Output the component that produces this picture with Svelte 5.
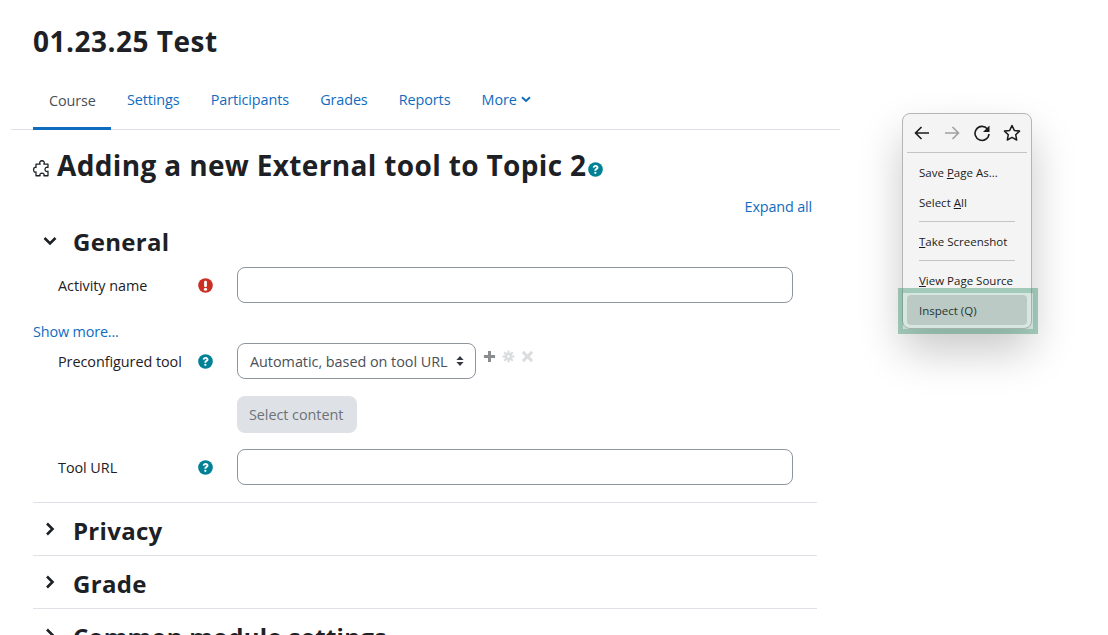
<script lang="ts">
    const tabs = ["Settings", "Participants", "Grades", "Reports"];
    const collapsed = ["Privacy", "Grade", "Common module settings"];
</script>

{#snippet help()}
    <svg class="help" viewBox="0 0 512 512" aria-hidden="true">
        <circle cx="256" cy="256" r="250" fill="#008196" />
        <path d="M160 190c6-56 46-88 100-88 54 0 98 32 98 84 0 40-24 58-50 74-18 11-24 20-24 40h-68c0-40 12-60 42-78 20-12 32-20 32-36 0-16-14-26-32-26-20 0-32 12-36 34z" fill="#fff" />
        <circle cx="250" cy="368" r="38" fill="#fff" />
    </svg>
{/snippet}

{#snippet chevronRight()}
    <svg class="chev" viewBox="0 0 14 14" aria-hidden="true">
        <path d="M4 1.500 9.500 7 4 12.500" fill="none" stroke="#1d2125" stroke-width="2.600" />
    </svg>
{/snippet}

<div class="page">
    <header class="title-row">
        <h1>01.23.25 Test</h1>
    </header>

    <nav class="tabs">
        <span class="tab active">Course</span>
        {#each tabs as tab}
            <span class="tab">{tab}</span>
        {/each}
        <span class="tab">
            More
            <svg class="more-caret" viewBox="0 0 10 7" aria-hidden="true">
                <path d="M1 1.200 5 5l4-3.800" fill="none" stroke="#0f6cbf" stroke-width="1.900" />
            </svg>
        </span>
    </nav>

    <main class="main">
        <div class="page-heading">
            <svg class="puzzle" viewBox="0 0 24 24" aria-hidden="true">
                <path d="M9.500 5.500C8 2.500 10 1 12 1s4 1.500 2.500 4.500H20V10c-2-1-4 .5-4 2.500s2 3.500 4 2.500v6h-5.500c1-2-.5-3.500-2.500-3.500S8.500 19 9.500 21H4v-5c-2 1-3.200-1-3.200-3S2 9 4 10V5.500z" fill="#fff" stroke="#1d2125" stroke-width="1.700" stroke-linejoin="round" />
            </svg>
            <h2>Adding a new External tool to Topic 2</h2>
            {@render help()}
        </div>

        <div class="expand-row"><span class="link">Expand all</span></div>

        <section class="fieldset">
            <div class="legend">
                <svg class="chev" viewBox="0 0 14 14" aria-hidden="true">
                    <path d="M1.500 4 7 9.500 12.500 4" fill="none" stroke="#1d2125" stroke-width="2.600" />
                </svg>
                <h3>General</h3>
            </div>

            <div class="field">
                <span class="label">Activity name</span>
                <span class="marker">
                    <svg class="help" viewBox="0 0 16 16" aria-hidden="true">
                        <circle cx="8" cy="8" r="7.800" fill="#ca3120" />
                        <rect x="6.500" y="3" width="3" height="6.600" rx="1.200" fill="#fff" />
                        <circle cx="8" cy="12" r="1.700" fill="#fff" />
                    </svg>
                </span>
                <div class="input"></div>
            </div>

            <div class="show-more"><span class="link">Show more...</span></div>

            <div class="field">
                <span class="label">Preconfigured tool</span>
                <span class="marker">{@render help()}</span>
                <div class="select">
                    <span>Automatic, based on tool URL</span>
                    <svg class="updown" viewBox="0 0 8 12" aria-hidden="true">
                        <path d="M4 1 7.600 5H.4zM4 11 .4 7h7.200z" fill="#343a40" />
                    </svg>
                </div>
                <div class="tool-actions">
                    <svg viewBox="0 0 14 14" aria-hidden="true">
                        <path d="M7 1v12M1 7h12" stroke="#8a8d90" stroke-width="3.200" />
                    </svg>
                    <svg viewBox="0 0 14 14" aria-hidden="true">
                        <circle cx="7" cy="7" r="4.400" fill="#dcdddf" />
                        <path d="M7 .5v13M.5 7h13M2.400 2.400l9.200 9.200M11.600 2.400l-9.200 9.200" stroke="#dcdddf" stroke-width="2.200" />
                        <circle cx="7" cy="7" r="1.300" fill="#fff" />
                    </svg>
                    <svg viewBox="0 0 14 14" aria-hidden="true">
                        <path d="m2 2 10 10M12 2 2 12" stroke="#dcdddf" stroke-width="3.200" />
                    </svg>
                </div>
            </div>

            <div class="button-row">
                <span class="btn-disabled">Select content</span>
            </div>

            <div class="field">
                <span class="label">Tool URL</span>
                <span class="marker">{@render help()}</span>
                <div class="input"></div>
            </div>
        </section>

        {#each collapsed as name}
            <section class="fieldset closed">
                <div class="legend">
                    {@render chevronRight()}
                    <h3>{name}</h3>
                </div>
            </section>
        {/each}
    </main>

    <!-- Browser context menu laid over the page -->
    <div class="menu">
        <div class="menu-nav">
            <svg viewBox="0 0 18 18" aria-hidden="true">
                <path d="M16 9H2.500M8.500 3 2.500 9l6 6" fill="none" stroke="#1b1b1b" stroke-width="1.600" />
            </svg>
            <svg viewBox="0 0 18 18" aria-hidden="true">
                <path d="M2 9h13.500M9.500 3l6 6-6 6" fill="none" stroke="#a0a0a0" stroke-width="1.600" />
            </svg>
            <svg viewBox="0 0 18 18" aria-hidden="true">
                <path d="M14.300 4.800A7 7 0 1 0 16 10" fill="none" stroke="#1b1b1b" stroke-width="1.600" />
                <path d="M16.500 1.500V8H10z" fill="#1b1b1b" />
            </svg>
            <svg viewBox="0 0 18 18" aria-hidden="true">
                <path d="m9 1.500 2.300 4.900 5.200.7-3.800 3.600 1 5.300L9 13.400 4.300 16l1-5.300L1.500 7.100l5.200-.7z" fill="none" stroke="#1b1b1b" stroke-width="1.500" stroke-linejoin="round" />
            </svg>
        </div>
        <div class="menu-rule wide"></div>
        <div class="menu-item">Save <u>P</u>age As...</div>
        <div class="menu-item">Select <u>A</u>ll</div>
        <div class="menu-rule"></div>
        <div class="menu-item"><u>T</u>ake Screenshot</div>
        <div class="menu-rule"></div>
        <div class="menu-item"><u>V</u>iew Page Source</div>
        <div class="menu-item inspect">Inspect (Q)</div>
        <div class="highlight"></div>
    </div>
</div>

<style>
    :global(body) {
        margin: 0;
        background: #fff;
        overflow: hidden;
    }

    .page {
        position: relative;
        width: 1108px;
        height: 635px;
        overflow: hidden;
        font-family: "Open Sans", "Noto Sans", sans-serif;
        color: #1d2125;
    }

    .title-row {
        padding: 22px 33px 0;
        height: 50px;
    }

    h1 {
        margin: 0;
        font-size: 28px;
        line-height: 38px;
        font-weight: 700;
        letter-spacing: 0.5px;
    }

    .tabs {
        display: flex;
        margin-left: 11px;
        width: 829px;
        height: 58px;
        padding-left: 22.400px;
        box-sizing: border-box;
        border-bottom: 1px solid #dee2e6;
    }

    .tab {
        display: flex;
        align-items: center;
        gap: 4px;
        padding: 0 15.600px 2px;
        font-size: 14.400px;
        letter-spacing: -0.1px;
        color: #0f6cbf;
    }

    .tab.active {
        color: #495057;
        box-shadow: inset 0 -3px 0 #0f6cbf;
        margin-bottom: -1px;
    }

    .more-caret {
        width: 10px;
        height: 7px;
    }

    .main {
        width: 784px;
        margin-left: 33px;
    }

    .page-heading {
        display: flex;
        align-items: center;
        height: 69px;
        padding-bottom: 2px;
    }

    .puzzle {
        width: 18px;
        height: 18px;
        margin: 8px 6px 0 0;
    }

    h2 {
        margin: 0;
        font-size: 28px;
        line-height: 38px;
        font-weight: 700;
        letter-spacing: 0.35px;
    }

    .page-heading .help {
        margin: 9px 0 0 2px;
    }

    .help {
        display: block;
        width: 15px;
        height: 15px;
    }

    .expand-row {
        display: flex;
        justify-content: flex-end;
        height: 22px;
        margin-top: -5px;
        padding-right: 5px;
    }

    .link {
        font-size: 14.400px;
        line-height: 22px;
        letter-spacing: -0.15px;
        color: #0f6cbf;
    }

    .fieldset {
        padding-bottom: 17px;
        border-bottom: 1px solid #dee2e6;
    }

    .fieldset.closed {
        padding: 4px 0 0;
        height: 48px;
    }

    .legend {
        display: flex;
        align-items: center;
        height: 48px;
        margin-bottom: 1px;
    }

    .chev {
        width: 14px;
        height: 14px;
        margin: 0 0 3px 10px;
    }

    .closed .chev {
        margin-bottom: 5px;
    }

    h3 {
        margin: 0 0 0 16px;
        font-size: 24px;
        line-height: 32px;
        font-weight: 700;
        letter-spacing: 0.3px;
        white-space: nowrap;
    }

    .field {
        display: flex;
        align-items: center;
        height: 36px;
        padding-left: 25px;
    }

    .label {
        width: 140px;
        font-size: 14.400px;
        letter-spacing: -0.05px;
    }

    .marker {
        width: 39px;
    }

    .input {
        width: 556px;
        height: 36px;
        box-sizing: border-box;
        border: 1px solid #8f959e;
        border-radius: 8px;
    }

    .show-more {
        height: 23px;
        margin-top: 17px;
    }

    .select {
        display: flex;
        align-items: center;
        justify-content: space-between;
        width: 239px;
        height: 36px;
        box-sizing: border-box;
        padding: 0 11px 0 12px;
        border: 1px solid #8f959e;
        border-radius: 8px;
        font-size: 14.400px;
        letter-spacing: -0.03px;
        color: #495057;
        white-space: nowrap;
    }

    .updown {
        width: 8px;
        height: 12px;
    }

    .tool-actions {
        display: flex;
        align-self: flex-start;
        gap: 6px;
        margin: 7px 0 0 7px;
    }

    .tool-actions svg {
        width: 13px;
        height: 13px;
    }

    .button-row {
        padding: 17px 0 16px 204px;
    }

    .btn-disabled {
        display: inline-block;
        padding: 0 14px 0 12px;
        height: 37px;
        line-height: 37px;
        border-radius: 8px;
        background: #dee2e6;
        color: #6d7278;
        font-size: 14.400px;
        letter-spacing: -0.05px;
    }

    .menu {
        position: absolute;
        left: 902px;
        top: 113px;
        width: 130px;
        height: 216px;
        box-sizing: border-box;
        padding: 0 4px;
        background: #f4f4f4;
        border: 1px solid #b5b5b5;
        border-radius: 8px;
        box-shadow: 0 22px 44px rgba(0, 0, 0, 0.22);
        font-size: 11.500px;
        color: #1b1b1b;
    }

    .menu-nav {
        display: flex;
        align-items: center;
        gap: 12px;
        height: 38px;
        padding-left: 6px;
    }

    .menu-nav svg {
        width: 18px;
        height: 18px;
    }

    .menu-rule {
        height: 1px;
        margin: 4px 12px;
        background: #c4c4c4;
    }

    .menu-rule.wide {
        margin: 0 0 4px;
    }

    .menu-item {
        display: flex;
        align-items: center;
        white-space: pre;
        height: 30px;
        padding-left: 12px;
    }

    .menu-item u {
        text-underline-offset: 1px;
    }

    .inspect {
        background: #d2d2d2;
        border-radius: 4px;
    }

    .highlight {
        position: absolute;
        left: -5px;
        top: 174px;
        width: 140px;
        height: 46px;
        box-sizing: border-box;
        border: 5px solid rgba(50, 140, 105, 0.42);
        background: rgba(70, 160, 125, 0.16);
        background-clip: padding-box;
        pointer-events: none;
    }
</style>
